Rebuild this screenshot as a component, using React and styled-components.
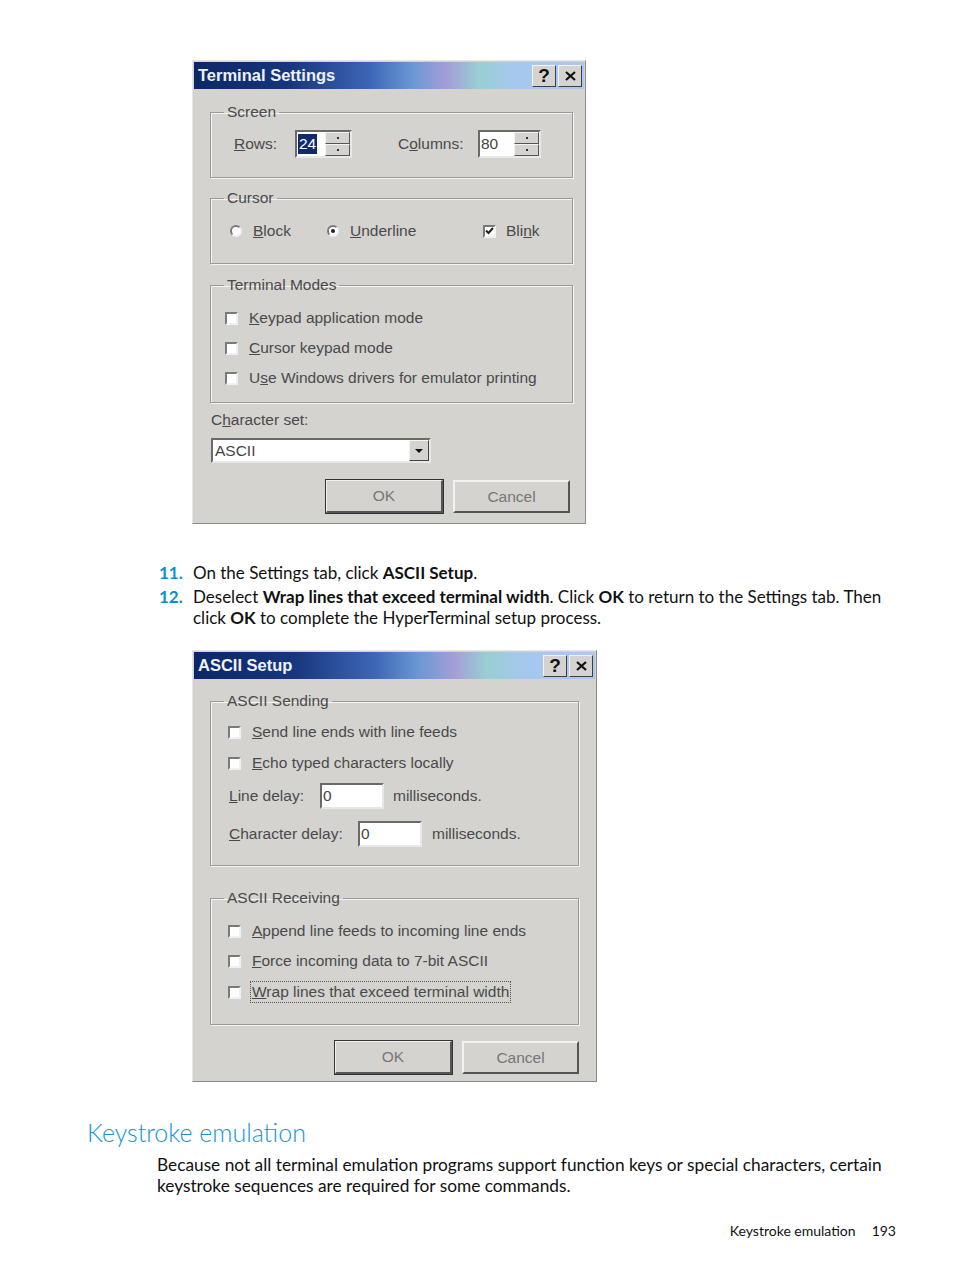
import React from "react"
import styled, { createGlobalStyle } from "styled-components"

const GlobalStyle = createGlobalStyle`
  body {
    margin: 0;
    background: #ffffff;
  }
`

const winFont = `"Liberation Sans", Arial, sans-serif`
const docFont = `Lato, "Liberation Sans", sans-serif`
const face = "#d4d3d0"

const Page = styled.div`
  width: 954px;
  height: 1271px;
  box-sizing: border-box;
  padding-top: 60px;
  font-family: ${docFont};
  color: #111;
`

const Dialog = styled.div`
  width: ${(p) => p.$w}px;
  margin-left: 192px;
  margin-top: ${(p) => p.$mt || 0}px;
  box-sizing: border-box;
  background: ${face};
  border: 1px solid #e6e6e6;
  border-right-color: #8a8a8a;
  border-bottom-color: #8a8a8a;
  padding: 1px 1px ${(p) => p.$pb}px;
  font-family: ${winFont};
  font-size: 15.5px;
  color: #4a4a4a;
`

const TitleBar = styled.div`
  height: 27px;
  display: flex;
  align-items: center;
  padding: 0 2px 0 4px;
  background: linear-gradient(
    90deg,
    #0b2766 0%,
    #18367e 25%,
    #3c66b6 45%,
    #6a98d4 56%,
    #a49ed8 65%,
    #98cfd2 73%,
    #a6c8ee 82%,
    #a8c8f0 100%
  );
`

const Title = styled.span`
  flex: 1;
  color: #eef1f8;
  font-weight: bold;
  font-size: 16.5px;
`

const TitleButton = styled.span`
  width: 24px;
  height: 22px;
  margin-left: 2px;
  box-sizing: border-box;
  background: ${face};
  border: 1px solid #f4f4f4;
  border-right-color: #404040;
  border-bottom-color: #404040;
  display: flex;
  align-items: center;
  justify-content: center;
  color: #111;
  font-weight: bold;
  font-size: 19px;
`

const Body = styled.div`
  padding: ${(p) => p.$pt}px ${(p) => p.$pr}px 0 ${(p) => p.$pl}px;
`

const Group = styled.fieldset`
  margin: ${(p) => p.$mt || 0}px 0 0;
  padding: 0;
  border: 1px solid #9a9a9a;
  box-shadow: inset 1px 1px 0 #f4f4f4, 1px 1px 0 #f4f4f4;
  min-width: 0;
`

const Legend = styled.legend`
  margin-left: 13px;
  padding: 0 3px;
  line-height: 18px;
`

const GroupContent = styled.div`
  padding: ${(p) => p.$pt}px 0 ${(p) => p.$pb}px ${(p) => p.$pl}px;
`

const Row = styled.div`
  display: flex;
  align-items: center;
  height: ${(p) => p.$h || 18}px;
  margin-top: ${(p) => p.$mt || 0}px;
`

const Label = styled.span`
  width: ${(p) => (p.$w ? `${p.$w}px` : "auto")};
  margin-left: ${(p) => p.$ml || 0}px;
  padding-left: ${(p) => p.$pl || 0}px;
  flex: none;
  white-space: nowrap;
  ${(p) => p.$focus && "outline: 1px dotted #555; outline-offset: 1px;"}
`

const Input = styled.div`
  width: ${(p) => p.$w}px;
  height: ${(p) => p.$h || 26}px;
  box-sizing: border-box;
  background: #fff;
  border: 2px solid #6a6a6a;
  border-right-color: #e8e8e8;
  border-bottom-color: #e8e8e8;
  margin-right: ${(p) => p.$mr || 0}px;
  display: flex;
  align-items: center;
  padding-left: 1px;
  color: #444;
`

const Selected = styled.span`
  background: #0f2a6e;
  color: #fff;
  padding: 1px 1px;
  line-height: 18px;
`

const Spin = styled.div`
  width: 25px;
  height: 100%;
  margin-left: auto;
  display: flex;
  flex-direction: column;
`

const SpinButton = styled.div`
  flex: 1;
  background: ${face};
  border: 1px solid #f4f4f4;
  border-right-color: #555;
  border-bottom-color: #555;
  display: flex;
  align-items: center;
  justify-content: center;
  &::after {
    content: "";
    width: 2px;
    height: 2px;
    background: #333;
  }
`

const Check = styled.span`
  width: 13px;
  height: 13px;
  box-sizing: border-box;
  flex: none;
  background: #fff;
  border: 2px solid #7a7a7a;
  border-right-color: #f0f0f0;
  border-bottom-color: #f0f0f0;
  margin-right: ${(p) => p.$mr || 11}px;
  display: flex;
  align-items: center;
  justify-content: center;
`

const Radio = styled.span`
  width: 12px;
  height: 12px;
  box-sizing: border-box;
  flex: none;
  border-radius: 50%;
  background: #fff;
  border: 2px solid #7a7a7a;
  border-right-color: #f0f0f0;
  border-bottom-color: #f0f0f0;
  margin-right: 11px;
  display: flex;
  align-items: center;
  justify-content: center;
  &::after {
    content: "";
    width: 4px;
    height: 4px;
    border-radius: 50%;
    background: ${(p) => (p.$on ? "#222" : "transparent")};
  }
`

const Plain = styled.div`
  margin-top: ${(p) => p.$mt}px;
  line-height: 18px;
  padding-left: 1px;
`

const Select = styled.div`
  width: 220px;
  height: 25px;
  margin-top: 9px;
  margin-left: 1px;
  box-sizing: border-box;
  background: #fff;
  border: 2px solid #6a6a6a;
  border-right-color: #e8e8e8;
  border-bottom-color: #e8e8e8;
  display: flex;
  align-items: center;
  padding-left: 2px;
  color: #444;
`

const DropButton = styled.div`
  width: 20px;
  height: 100%;
  margin-left: auto;
  background: ${face};
  border: 1px solid #f4f4f4;
  border-right-color: #444;
  border-bottom-color: #444;
  box-sizing: border-box;
  display: flex;
  align-items: center;
  justify-content: center;
  &::after {
    content: "";
    border-left: 4px solid transparent;
    border-right: 4px solid transparent;
    border-top: 4px solid #111;
  }
`

const Buttons = styled.div`
  display: flex;
  justify-content: flex-end;
  gap: 10px;
  margin-top: ${(p) => p.$mt}px;
  margin-right: ${(p) => p.$mr || 0}px;
`

const Button = styled.div`
  width: 117px;
  height: 33px;
  box-sizing: border-box;
  background: ${face};
  border: 2px solid #f2f2f2;
  border-right-color: #555;
  border-bottom-color: #555;
  ${(p) => p.$default && "outline: 1px solid #333; border-width: 1px 2px 2px 1px;"}
  display: flex;
  align-items: center;
  justify-content: center;
  color: #777;
`

const List = styled.ol`
  list-style: none;
  margin: 38px 0 0;
  padding: 0 70px 0 159px;
  font-size: 17px;
  line-height: 21px;
`

const Item = styled.li`
  display: flex;
  margin-top: ${(p) => p.$mt || 0}px;
`

const Num = styled.span`
  width: 34px;
  flex: none;
  color: #0a8fd0;
  font-weight: bold;
`

const Heading = styled.h2`
  margin: 33px 0 0 87px;
  font-weight: 300;
  font-size: 25px;
  line-height: 34px;
  color: #1494d4;
`

const Para = styled.p`
  margin: 5px 60px 0 157px;
  font-size: 17.3px;
  line-height: 21px;
`

const Footer = styled.div`
  margin-top: 26px;
  padding-right: 58px;
  display: flex;
  justify-content: flex-end;
  gap: 16px;
  font-size: 14px;
`

const TitleButtons = () => (
  <>
    <TitleButton>?</TitleButton>
    <TitleButton>
      <svg width="11" height="10" viewBox="0 0 11 10">
        <path d="M1 1 L10 9 M10 1 L1 9" stroke="#111" strokeWidth="2.2" />
      </svg>
    </TitleButton>
  </>
)

const Tick = () => (
  <svg width="9" height="8" viewBox="0 0 9 8">
    <path d="M1 3.5 L3.5 6 L8 1" stroke="#222" strokeWidth="2" fill="none" />
  </svg>
)

const CheckRow = ({ mt, children, focus }) => (
  <Row $mt={mt}>
    <Check />
    <Label $focus={focus}>{children}</Label>
  </Row>
)

const App = () => {
  return (
    <Page>
      <GlobalStyle />
      <Dialog $w={394} $pb={10}>
        <TitleBar>
          <Title>Terminal Settings</Title>
          <TitleButtons />
        </TitleBar>
        <Body $pt={14} $pl={16} $pr={11}>
          <Group>
            <Legend>Screen</Legend>
            <GroupContent $pt={9} $pb={19} $pl={23}>
              <Row $h={28}>
                <Label $w={61}>
                  <u>R</u>ows:
                </Label>
                <Input $w={57} $h={28}>
                  <Selected>24</Selected>
                  <Spin>
                    <SpinButton />
                    <SpinButton />
                  </Spin>
                </Input>
                <Label $w={80} $ml={46}>
                  C<u>o</u>lumns:
                </Label>
                <Input $w={63} $h={28}>
                  80
                  <Spin>
                    <SpinButton />
                    <SpinButton />
                  </Spin>
                </Input>
              </Row>
            </GroupContent>
          </Group>
          <Group $mt={11}>
            <Legend>Cursor</Legend>
            <GroupContent $pt={15} $pb={23} $pl={19}>
              <Row>
                <Radio />
                <Label $w={74}>
                  <u>B</u>lock
                </Label>
                <Radio $on />
                <Label $w={133}>
                  <u>U</u>nderline
                </Label>
                <Check $mr={10}>
                  <Tick />
                </Check>
                <Label>
                  Bli<u>n</u>k
                </Label>
              </Row>
            </GroupContent>
          </Group>
          <Group $mt={12}>
            <Legend>Terminal Modes</Legend>
            <GroupContent $pt={15} $pb={15} $pl={14}>
              <CheckRow>
                <u>K</u>eypad application mode
              </CheckRow>
              <CheckRow mt={12}>
                <u>C</u>ursor keypad mode
              </CheckRow>
              <CheckRow mt={12}>
                U<u>s</u>e Windows drivers for emulator printing
              </CheckRow>
            </GroupContent>
          </Group>
          <Plain $mt={8}>
            C<u>h</u>aracter set:
          </Plain>
          <Select>
            ASCII
            <DropButton />
          </Select>
          <Buttons $mt={17} $mr={3}>
            <Button $default>OK</Button>
            <Button>Cancel</Button>
          </Buttons>
        </Body>
      </Dialog>

      <List>
        <Item>
          <Num>11.</Num>
          <span>
            On the Settings tab, click <b>ASCII Setup</b>.
          </span>
        </Item>
        <Item $mt={3}>
          <Num>12.</Num>
          <span>
            Deselect <b>Wrap lines that exceed terminal width</b>. Click <b>OK</b> to
            return to the Settings tab. Then
            <br />
            click <b>OK</b> to complete the HyperTerminal setup process.
          </span>
        </Item>
      </List>

      <Dialog $w={405} $pb={7} $mt={22}>
        <TitleBar>
          <Title>ASCII Setup</Title>
          <TitleButtons />
        </TitleBar>
        <Body $pt={13} $pl={16} $pr={16}>
          <Group>
            <Legend>ASCII Sending</Legend>
            <GroupContent $pt={13} $pb={18} $pl={17}>
              <CheckRow>
                <u>S</u>end line ends with line feeds
              </CheckRow>
              <CheckRow mt={13}>
                <u>E</u>cho typed characters locally
              </CheckRow>
              <Row $h={26} $mt={11}>
                <Label $w={91} $pl={1}>
                  <u>L</u>ine delay:
                </Label>
                <Input $w={64} $mr={9}>
                  0
                </Input>
                <Label>milliseconds.</Label>
              </Row>
              <Row $h={26} $mt={12}>
                <Label $w={129} $pl={1}>
                  <u>C</u>haracter delay:
                </Label>
                <Input $w={64} $mr={10}>
                  0
                </Input>
                <Label>milliseconds.</Label>
              </Row>
            </GroupContent>
          </Group>
          <Group $mt={23}>
            <Legend>ASCII Receiving</Legend>
            <GroupContent $pt={15} $pb={23} $pl={17}>
              <CheckRow>
                <u>A</u>ppend line feeds to incoming line ends
              </CheckRow>
              <CheckRow mt={12}>
                <u>F</u>orce incoming data to 7-bit ASCII
              </CheckRow>
              <CheckRow mt={13} focus>
                <u>W</u>rap lines that exceed terminal width
              </CheckRow>
            </GroupContent>
          </Group>
          <Buttons $mt={16}>
            <Button $default>OK</Button>
            <Button>Cancel</Button>
          </Buttons>
        </Body>
      </Dialog>

      <Heading>Keystroke emulation</Heading>
      <Para>
        Because not all terminal emulation programs support function keys or special
        characters, certain keystroke sequences are required for some commands.
      </Para>
      <Footer>
        <span>Keystroke emulation</span>
        <span>193</span>
      </Footer>
    </Page>
  )
}

export default App
